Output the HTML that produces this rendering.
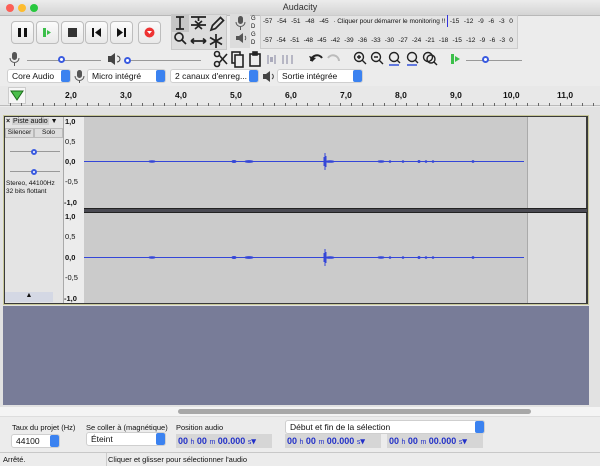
<!DOCTYPE html>
<html><head><meta charset="utf-8"><style>
*{margin:0;padding:0;box-sizing:border-box}
body{width:600px;height:466px;overflow:hidden;background:#ececec;font-family:"Liberation Sans",sans-serif;position:relative;font-size:8px;color:#111}
.a{position:absolute}
.btn{position:absolute;width:23px;height:23px;border:1px solid #bdbdbd;border-radius:4px;background:linear-gradient(#fbfbfb,#e9e9e9)}
.sel{position:absolute;height:14px;background:#fff;border:1px solid #cfcfcf;border-radius:3px;font-size:8.5px;line-height:12px;padding-left:4px}
.sel:after{content:"";position:absolute;right:0;top:0;width:9px;height:12px;background:#3b82f0;border-radius:2px}
.lbl{position:absolute;font-size:7.5px}
.time{position:absolute;height:14px;background:#d6d6d6;color:#2230c8;font-weight:bold;font-size:9px;line-height:14px;padding-left:2px;white-space:nowrap}
.time small{font-size:7px;font-weight:normal}
.mt{position:absolute;display:flex;justify-content:space-between;font-size:6.5px;white-space:nowrap}
</style></head><body>
<div class="a" style="left:0;top:0;width:600px;height:16px;background:linear-gradient(#ececec,#d4d4d4);border-bottom:1px solid #b8b8b8"></div>
<div class="a" style="left:6px;top:4px;width:8px;height:8px;border-radius:50%;background:#fc5f57"></div>
<div class="a" style="left:18px;top:4px;width:8px;height:8px;border-radius:50%;background:#fdbc2e"></div>
<div class="a" style="left:30px;top:4px;width:8px;height:8px;border-radius:50%;background:#29c83f"></div>
<div class="a" style="left:0;top:2px;width:600px;text-align:center;font-size:9px;color:#333">Audacity</div>

<div class="btn" style="left:11px;top:21px"><svg width="21" height="21"><rect x="6" y="6" width="3" height="9" fill="#111"/><rect x="12" y="6" width="3" height="9" fill="#111"/></svg></div>
<div class="btn" style="left:36px;top:21px"><svg width="21" height="21"><rect x="6" y="6" width="3" height="9" fill="#3cbf4a"/><path d="M10 8l4 2.5-4 2.5z" fill="#3cbf4a"/></svg></div>
<div class="btn" style="left:61px;top:21px"><svg width="21" height="21"><rect x="6" y="6" width="9" height="9" fill="#333"/></svg></div>
<div class="btn" style="left:85px;top:21px"><svg width="21" height="21"><rect x="6" y="6" width="2" height="9" fill="#111"/><path d="M15 6v9l-6-4.5z" fill="#111"/></svg></div>
<div class="btn" style="left:110px;top:21px"><svg width="21" height="21"><rect x="13" y="6" width="2" height="9" fill="#111"/><path d="M6 6v9l6-4.5z" fill="#111"/></svg></div>
<div class="btn" style="left:138px;top:21px"><svg width="21" height="21"><circle cx="10.5" cy="10.5" r="5" fill="#e33"/><path d="M8 9h5l-2.5 3z" fill="#fff"/></svg></div>

<div class="a" style="left:171px;top:14px;width:56px;height:36px;background:#dcdcdc;border:1px solid #c8c8c8"></div>
<div class="a" style="left:172px;top:15px;width:17px;height:17px;background:#c6c6c6"></div>
<svg class="a" style="left:171px;top:14px" width="56" height="36" stroke="#222" fill="none" stroke-width="1.7">
<path d="M5 3h8M9 3v12M5 15h8"/>
<path d="M20 3h15M27.5 3v4M24 7l3.5 3 3.5-3M20 11h15M24 15l3.5-3 3.5 3"/>
<path d="M40 16l1.5-4.5 8-8 3 3-8 8z"/>
<circle cx="8" cy="23" r="4"/><path d="M11 26l4 4"/>
<path d="M20 27h15M20 27l3-2.5M20 27l3 2.5M35 27l-3-2.5M35 27l-3 2.5"/>
<path d="M45 20v14M39 23.5l12 7M39 30.5l12-7"/>
</svg>

<div class="a" style="left:230px;top:14px;width:20px;height:34px;background:#dcdcdc"></div>
<svg class="a" style="left:233px;top:15px" width="16" height="32"><rect x="5" y="1" width="5" height="8" rx="2.5" fill="#555"/><path d="M3 7a4.5 4.5 0 0 0 9 0M7.5 12v3" stroke="#555" fill="none"/><path d="M3 21h3l4-3v10l-4-3H3z" fill="#555"/><path d="M12 21a3 3 0 0 1 0 4" stroke="#555" fill="none"/></svg>
<div class="a" style="left:251px;top:15px;font-size:6px;line-height:8px">G<br>D<br>G<br>D</div>
<div class="a" style="left:260px;top:15px;width:258px;height:34px;background:#e4e4e4;border:1px solid #ccc"></div>
<div class="mt" style="left:263px;top:18px;width:250px"><span>-57</span><span>-54</span><span>-51</span><span>-48</span><span>-45</span><span>· Cliquer pour démarrer le monitoring !!</span><span>-15</span><span>-12</span><span>-9</span><span>-6</span><span>-3</span><span>0</span></div>
<div class="a" style="left:447px;top:15px;width:1px;height:12px;background:#33d"></div>
<div class="mt" style="left:263px;top:37px;width:250px"><span>-57</span><span>-54</span><span>-51</span><span>-48</span><span>-45</span><span>-42</span><span>-39</span><span>-36</span><span>-33</span><span>-30</span><span>-27</span><span>-24</span><span>-21</span><span>-18</span><span>-15</span><span>-12</span><span>-9</span><span>-6</span><span>-3</span><span>0</span></div>

<svg class="a" style="left:9px;top:51px" width="12" height="16"><rect x="3" y="1" width="5" height="8" rx="2.5" fill="#555"/><path d="M1 7a4.5 4.5 0 0 0 9 0M5.5 11v4" stroke="#555" fill="none"/></svg>
<div class="a" style="left:27px;top:60px;width:74px;height:1px;background:#999"></div>
<div class="a" style="left:58px;top:56px;width:7px;height:7px;border:2px solid #3a5be0;border-radius:50%;background:#fff"></div>
<svg class="a" style="left:107px;top:52px" width="14" height="14"><path d="M1 4h3l4-3v12l-4-3H1z" fill="#444"/><path d="M10 4a3 3 0 0 1 0 6" stroke="#444" fill="none"/></svg>
<div class="a" style="left:125px;top:60px;width:76px;height:1px;background:#999"></div>
<div class="a" style="left:124px;top:57px;width:7px;height:7px;border:2px solid #3a5be0;border-radius:50%;background:#fff"></div>
<svg class="a" style="left:212px;top:50px" width="90" height="18" stroke="#222" fill="none" stroke-width="1.6">
<circle cx="5" cy="4" r="2.5"/><circle cx="5" cy="14" r="2.5"/><path d="M7 5l8 9M7 13l8-9"/>
<rect x="20" y="2" width="8" height="11"/><rect x="23" y="5" width="8" height="12" fill="#ececec"/>
<rect x="38" y="4" width="10" height="12"/><rect x="41" y="2" width="4" height="3" fill="#222"/>
<path d="M56 5v9M63 5v9" stroke="#aab"/><rect x="58" y="7" width="3" height="5" fill="#aab" stroke="none"/>
<path d="M71 5v9M80 5v9M75 5v9" stroke="#aab"/>
</svg>
<svg class="a" style="left:307px;top:50px" width="36" height="18"><path d="M4 11a6 6 0 0 1 11-3" stroke="#222" stroke-width="2" fill="none"/><path d="M2 6l3 6 4-4z" fill="#222"/><path d="M32 11a6 6 0 0 0-11-3" stroke="#bbb" stroke-width="2" fill="none"/></svg>
<svg class="a" style="left:352px;top:50px" width="90" height="18" stroke="#222" fill="none" stroke-width="1.4">
<circle cx="7" cy="7" r="4.5"/><path d="M10 10l4 4M5 7h4M7 5v4"/>
<circle cx="24" cy="7" r="4.5"/><path d="M27 10l4 4M22 7h4"/>
<circle cx="42" cy="7" r="4.5"/><path d="M45 10l3 3"/><path d="M37 15h10" stroke="#2848d8"/>
<circle cx="60" cy="7" r="4.5"/><path d="M63 10l3 3"/><path d="M55 15h10" stroke="#2848d8"/>
<circle cx="76" cy="7" r="4.5"/><circle cx="79" cy="9" r="4"/><path d="M82 12l3 3"/>
</svg>
<svg class="a" style="left:448px;top:52px" width="14" height="14"><rect x="3" y="2" width="3" height="10" fill="#3cbf4a"/><path d="M7 4l5 3-5 3z" fill="#3cbf4a"/></svg>
<div class="a" style="left:466px;top:60px;width:56px;height:1px;background:#999"></div>
<div class="a" style="left:482px;top:56px;width:7px;height:7px;border:2px solid #3a5be0;border-radius:50%;background:#fff"></div>

<div class="sel" style="left:7px;top:69px;width:64px">Core Audio</div>
<svg class="a" style="left:74px;top:69px" width="12" height="15"><rect x="3" y="1" width="5" height="8" rx="2.5" fill="#555"/><path d="M1 7a4.5 4.5 0 0 0 9 0M5.5 11v3" stroke="#555" fill="none"/></svg>
<div class="sel" style="left:87px;top:69px;width:79px">Micro intégré</div>
<div class="sel" style="left:170px;top:69px;width:89px">2 canaux d'enreg...</div>
<svg class="a" style="left:262px;top:70px" width="14" height="13"><path d="M1 4h3l4-3v11l-4-3H1z" fill="#444"/><path d="M10 4a3 3 0 0 1 0 5" stroke="#444" fill="none"/></svg>
<div class="sel" style="left:277px;top:69px;width:86px">Sortie intégrée</div>

<div class="a" style="left:0;top:86px;width:600px;height:20px;background:#e8e8e8;border-bottom:1px solid #bbb"></div>
<div class="a" style="left:8px;top:87px;width:18px;height:17px;background:#f6f6f6;border:1px solid #ccc"></div>
<svg class="a" style="left:10px;top:89px" width="14" height="12"><path d="M1 2h12l-6 9z" fill="#4bbf4b" stroke="#1a6a1a"/></svg>
<div class="a" style="left:0;top:90px;width:600px;height:12px;font-size:8.5px;font-weight:bold">
<span class="a" style="left:65px">2,0</span><span class="a" style="left:120px">3,0</span><span class="a" style="left:175px">4,0</span><span class="a" style="left:230px">5,0</span><span class="a" style="left:285px">6,0</span><span class="a" style="left:340px">7,0</span><span class="a" style="left:395px">8,0</span><span class="a" style="left:450px">9,0</span><span class="a" style="left:503px">10,0</span><span class="a" style="left:557px">11,0</span></div>
<div class="a" style="left:0;top:103px;width:600px;height:3px;background:repeating-linear-gradient(90deg,transparent 0 10px,#666 10px 11px)"></div>

<div class="a" style="left:0;top:107px;width:600px;height:300px;background:#e2e2e2"></div>
<div class="a" style="left:3px;top:115px;width:586px;height:190px;background:#3a3a3a;border:1px solid #c8c89a"></div>
<div class="a" style="left:5px;top:117px;width:59px;height:186px;background:#e4e4e4;border-right:1px solid #aaa"></div>
<div class="a" style="left:6px;top:118px;font-size:7px;width:58px;white-space:nowrap"><b>×</b> <span style="background:#d0d0d0;padding:0 1px">Piste audio</span> ▼</div>
<div class="a" style="left:5px;top:128px;width:29px;height:10px;font-size:6.5px;text-align:center;border:1px solid #bbb;background:#ddd">Silencer</div>
<div class="a" style="left:34px;top:128px;width:29px;height:10px;font-size:6.5px;text-align:center;border:1px solid #bbb;background:#ddd">Solo</div>
<div class="a" style="left:10px;top:151px;width:50px;height:1px;background:#999"></div>
<div class="a" style="left:31px;top:149px;width:6px;height:6px;border:2px solid #3a5be0;border-radius:50%;background:#fff"></div>
<div class="a" style="left:10px;top:171px;width:50px;height:1px;background:#999"></div>
<div class="a" style="left:31px;top:169px;width:6px;height:6px;border:2px solid #3a5be0;border-radius:50%;background:#fff"></div>
<div class="a" style="left:6px;top:180px;font-size:6.5px;line-height:8px">Stereo, 44100Hz<br>32 bits flottant</div>
<div class="a" style="left:5px;top:292px;width:48px;height:10px;background:#d4d8e4;font-size:7px;text-align:center">▲</div>
<div class="a" style="left:64px;top:117px;width:20px;height:186px;background:#ececec"></div>
<div class="a" style="left:65px;top:117px;font-size:7.5px;font-weight:bold;line-height:9px">
<div class="a" style="top:0">1,0</div><div class="a" style="top:20px;font-weight:normal">0,5</div><div class="a" style="top:40px">0,0</div><div class="a" style="top:60px;font-weight:normal">-0,5</div><div class="a" style="top:81px;left:-1px">-1,0</div>
<div class="a" style="top:95px">1,0</div><div class="a" style="top:115px;font-weight:normal">0,5</div><div class="a" style="top:136px">0,0</div><div class="a" style="top:156px;font-weight:normal">-0,5</div><div class="a" style="top:177px;left:-1px">-1,0</div></div>
<div class="a" style="left:84px;top:117px;width:443px;height:91px;background:#cbcbcb"></div>
<div class="a" style="left:527px;top:117px;width:59px;height:91px;background:#dedede;border-left:1px solid #aaa"></div>
<div class="a" style="left:84px;top:208px;width:503px;height:5px;background:#4a4a52;border-top:1px solid #222;border-bottom:1px solid #222"></div>
<div class="a" style="left:84px;top:213px;width:443px;height:90px;background:#cbcbcb"></div>
<div class="a" style="left:527px;top:213px;width:59px;height:90px;background:#dedede;border-left:1px solid #aaa"></div>
<svg class="a" style="left:84px;top:117px" width="443" height="186" stroke="#3446d8" fill="#3446d8">
<g id="w"><path d="M0 44.5H440" stroke-width="1"/>
<ellipse cx="68" cy="44.5" rx="3" ry="0.7"/><ellipse cx="150" cy="44.5" rx="2" ry="1"/><ellipse cx="165" cy="44.5" rx="4" ry="0.9"/><ellipse cx="246" cy="44.5" rx="4" ry="0.8"/><ellipse cx="297" cy="44.5" rx="3" ry="0.7"/>
<path d="M241 36v17M240 40v9M242 39v11" stroke-width="1"/>
<circle cx="319" cy="44.5" r="0.8"/><circle cx="335" cy="44.5" r="1"/><circle cx="342" cy="44.5" r="0.8"/><circle cx="349" cy="44.5" r="0.8"/><circle cx="306" cy="44.5" r="0.8"/><circle cx="389" cy="44.5" r="0.9"/></g>
<use href="#w" y="96"/>
</svg>
<div class="a" style="left:3px;top:306px;width:586px;height:99px;background:#787c98"></div>
<div class="a" style="left:0;top:407px;width:600px;height:10px;background:#f4f4f4;border-bottom:1px solid #ddd"></div>
<div class="a" style="left:178px;top:409px;width:353px;height:5px;border-radius:3px;background:#a8a8a8"></div>
<div class="lbl" style="left:12px;top:423px">Taux du projet (Hz)</div>
<div class="lbl" style="left:86px;top:423px">Se coller à (magnétique)</div>
<div class="lbl" style="left:176px;top:423px">Position audio</div>
<div class="sel" style="left:11px;top:434px;width:49px">44100</div>
<div class="sel" style="left:86px;top:432px;width:80px">Éteint</div>
<div class="sel" style="left:285px;top:420px;width:200px">Début et fin de la sélection</div>
<div class="time" style="left:176px;top:434px;width:96px">00 <small>h</small> 00 <small>m</small> 00.000 <small>s</small>▾</div>
<div class="time" style="left:285px;top:434px;width:96px">00 <small>h</small> 00 <small>m</small> 00.000 <small>s</small>▾</div>
<div class="time" style="left:387px;top:434px;width:96px">00 <small>h</small> 00 <small>m</small> 00.000 <small>s</small>▾</div>
<div class="a" style="left:0;top:452px;width:600px;height:14px;background:#ececec;border-top:1px solid #c8c8c8;font-size:7.5px;line-height:13px"><span class="a" style="left:3px">Arrêté.</span><span class="a" style="left:108px">Cliquer et glisser pour sélectionner l'audio</span></div>
<div class="a" style="left:106px;top:453px;width:1px;height:13px;background:#ccc"></div>
</body></html>
